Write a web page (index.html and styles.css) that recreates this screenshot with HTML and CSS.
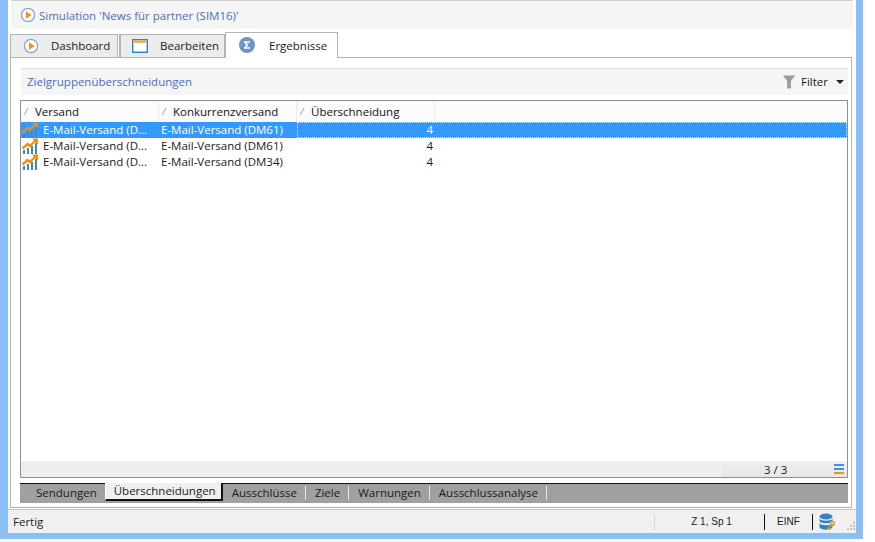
FILE: index.html
```html
<!DOCTYPE html>
<html>
<head>
  <title>Simulation</title>
  <link rel="stylesheet" href="styles.css">
</head>
<body>
  <svg class="defs" width="0" height="0">
    <symbol id="play" viewBox="0 0 16 16">
      <circle cx="8" cy="8" r="6.6" fill="#fdfdfd" stroke="#8aa6cf" stroke-width="1.3"/>
      <path d="M6 4.2 L11.6 8 L6 11.8 Z" fill="#f0920f"/>
    </symbol>
    <symbol id="chart" viewBox="0 0 16 16">
      <path d="M1 16v-4h2v4zM5 16v-6h2v6zM9 16v-8h2v8zM13 16v-11h2v11z" fill="#3f86c9"/>
      <path d="M0.500 10.500 L5.500 6 L8 8 L14 2" fill="none" stroke="#f0920f" stroke-width="2.400"/>
      <path d="M10 0.500 H16 V6.500 Z" fill="#f0920f"/>
    </symbol>
  </svg>

  <div class="window">
    <div class="title-bar">
      <svg class="icon"><use href="#play"/></svg>
      <span>Simulation 'News für partner (SIM16)'</span>
    </div>

    <div class="tabs">
      <div class="tab tab-dashboard">
        <svg class="icon"><use href="#play"/></svg>
        <span>Dashboard</span>
      </div>
      <div class="tab tab-edit">
        <svg class="icon" viewBox="0 0 16 16">
          <rect x="0.7" y="1.7" width="14.6" height="12.6" fill="#fff" stroke="#2e83c8" stroke-width="1.4"/>
          <rect x="1.4" y="2.4" width="13.2" height="2.6" fill="#f3b24a"/>
        </svg>
        <span>Bearbeiten</span>
      </div>
      <div class="tab tab-active">
        <svg class="icon" viewBox="0 0 16 16">
          <circle cx="8" cy="8" r="8" fill="#6f93c4"/>
          <path d="M5 4.2h6v1.5H7.4L9.3 8 7.4 10.3H11v1.5H5v-1.3L7.3 8 5 5.5z" fill="#fff"/>
        </svg>
        <span>Ergebnisse</span>
      </div>
    </div>

    <div class="panel">
      <div class="section-head">
        <span class="section-title">Zielgruppenüberschneidungen</span>
        <div class="filter">
          <svg class="filter-icon" viewBox="0 0 14 14"><path d="M0 0H13L8.5 6V14H4.5V6Z" fill="#999"/></svg>
          <span>Filter</span>
          <span class="caret"></span>
        </div>
      </div>

      <div class="grid">
        <div class="grid-head">
          <div class="col"><i class="sort">⁄</i>Versand</div>
          <div class="col"><i class="sort">⁄</i>Konkurrenzversand</div>
          <div class="col"><i class="sort">⁄</i>Überschneidung</div>
        </div>
        <div class="row row-selected">
          <div class="cell"><svg class="icon-chart"><use href="#chart"/></svg>E-Mail-Versand (D...</div>
          <div class="cell cell-2">E-Mail-Versand (DM61)</div>
          <div class="cell-focus"><span class="num">4</span></div>
        </div>
        <div class="row">
          <div class="cell"><svg class="icon-chart"><use href="#chart"/></svg>E-Mail-Versand (D...</div>
          <div class="cell cell-2">E-Mail-Versand (DM61)</div>
          <div class="cell-num">4</div>
        </div>
        <div class="row">
          <div class="cell"><svg class="icon-chart"><use href="#chart"/></svg>E-Mail-Versand (D...</div>
          <div class="cell cell-2">E-Mail-Versand (DM34)</div>
          <div class="cell-num">4</div>
        </div>
        <div class="grid-space"></div>
        <div class="grid-foot">
          <div class="counter">
            <span>3 / 3</span>
            <svg class="menu-icon" viewBox="0 0 10 10">
              <rect width="10" height="2" fill="#3f8fdc"/>
              <rect y="4" width="10" height="2" fill="#3f8fdc"/>
              <rect y="8" width="10" height="2" fill="#e8981f"/>
            </svg>
          </div>
        </div>
      </div>

      <div class="sub-tabs">
        <div class="sub-tab sub-first">Sendungen</div>
        <div class="sub-tab sub-active">Überschneidungen</div>
        <div class="sub-tab">Ausschlüsse</div>
        <div class="sub-tab">Ziele</div>
        <div class="sub-tab">Warnungen</div>
        <div class="sub-tab">Ausschlussanalyse</div>
      </div>
    </div>

    <div class="status-bar">
      <span class="status-text">Fertig</span>
      <div class="status-pos">Z 1, Sp 1</div>
      <div class="status-ins">EINF</div>
      <svg class="db-icon" viewBox="0 0 16 18">
        <ellipse cx="7" cy="3.5" rx="6.5" ry="3" fill="#2e83c8"/>
        <path d="M0.5 5.5c1 3 12 3 13 0v2.5c-1 3-12 3-13 0z" fill="#2e83c8"/>
        <path d="M0.5 10c1 3 12 3 13 0v4c-1 3.500-12 3.500-13 0z" fill="#2e83c8"/>
        <circle cx="13.500" cy="10.500" r="2" fill="none" stroke="#e8981f" stroke-width="1.400"/>
        <path d="M12.300 12L8 16.500M9.500 15l1.500 1.500" fill="none" stroke="#e8981f" stroke-width="1.500"/>
      </svg>
      <svg class="grip" viewBox="0 0 8 8">
        <path d="M6 0h2v2H6zM3 3h2v2H3zM6 3h2v2H6zM0 6h2v2H0zM3 6h2v2H3zM6 6h2v2H6z" fill="#c4c4c4"/>
      </svg>
    </div>
  </div>
</body>
</html>
```
FILE: styles.css
```css
html, body {
  margin: 0;
  padding: 0;
  background-color: #fff;
}

body {
  font-family: "Open Sans", Arial, sans-serif;
  font-size: 11.5px;
  color: #1a1a1a;
}

.defs {
  display: block;
  height: 0;
}

.window {
  box-sizing: border-box;
  width: 863px;
  height: 539px;
  background-color: #fff;
  border-left: 8px solid #8abff5;
  border-right: 7px solid #8abff5;
  border-bottom: 6px solid #8abff5;
  display: flex;
  flex-direction: column;
  padding: 0;
}

.icon {
  width: 16px;
  height: 16px;
  flex: none;
}

.title-bar {
  height: 28px;
  margin: 0 3px 0 3px;
  background-color: #f5f5f5;
  border-top: 1px solid #d0d0d0;
  display: flex;
  align-items: center;
  padding-left: 9px;
  color: #4a6fc0;
  flex: none;
}

.title-bar span {
  margin-left: 3px;
}

.tabs {
  display: flex;
  align-items: flex-end;
  height: 28px;
  margin-left: 2px;
  flex: none;
  position: relative;
  z-index: 1;
}

.tab {
  box-sizing: border-box;
  height: 23px;
  padding-bottom: 1px;
  background-color: #ececec;
  border: 1px solid #b4b4b4;
  border-bottom: none;
  display: flex;
  align-items: center;
}

.tab-dashboard {
  width: 108px;
  padding-left: 12px;
}

.tab-dashboard span {
  margin-left: 12px;
}

.tab-edit {
  width: 106px;
  padding-left: 11px;
  margin-left: 1px;
  border-left-width: 2px;
}

.tab-edit span {
  margin-left: 12px;
}

.tab-active {
  width: 113px;
  height: 26px;
  margin-bottom: -1px;
  background-color: #fff;
  padding-left: 13px;
}

.tab-active span {
  margin-left: 14px;
}

.panel {
  box-sizing: border-box;
  flex: 1;
  margin: 0 4px 0 2px;
  border: 1px solid #b4b4b4;
  background-color: #fff;
  padding: 10px 3px 4px 9px;
  display: flex;
  flex-direction: column;
  min-height: 0;
}

.section-head {
  box-sizing: border-box;
  height: 27px;
  margin: 0 0 5px 1px;
  background-color: #f5f5f5;
  border-top: 1px solid #dcdcdc;
  display: flex;
  align-items: center;
  padding: 0 4px 1px 6px;
  flex: none;
}

.section-title {
  color: #4a6fc0;
  flex: 1;
}

.filter {
  display: flex;
  align-items: center;
}

.filter-icon {
  width: 13px;
  height: 14px;
  margin-right: 5px;
}

.caret {
  width: 0;
  height: 0;
  margin-left: 8px;
  border-left: 4px solid transparent;
  border-right: 4px solid transparent;
  border-top: 4px solid #222;
}

.grid {
  box-sizing: border-box;
  flex: 1;
  border: 1px solid #8b9097;
  display: flex;
  flex-direction: column;
  min-height: 0;
}

.grid-head {
  display: flex;
  height: 21px;
  background-color: #fbfbfb;
  flex: none;
}

.col {
  box-sizing: border-box;
  width: 138px;
  border-right: 1px solid #e3ecf6;
  display: flex;
  align-items: center;
  color: #111;
}

.sort {
  width: 14px;
  margin-left: -2px;
  padding-right: 2px;
  text-align: center;
  font-size: 9px;
  font-style: normal;
  color: #777;
}

.row {
  display: flex;
  height: 16px;
  line-height: 16px;
  flex: none;
}

.row-selected {
  background-color: #3399ff;
  color: #fff;
}

.cell {
  width: 137px;
  display: flex;
  align-items: center;
  flex: none;
  white-space: nowrap;
}

.cell-2 {
  width: 139px;
  padding-left: 3px;
  box-sizing: border-box;
}

.icon-chart {
  width: 16px;
  height: 16px;
  margin: 0 5px 0 1px;
  flex: none;
}

.row-selected .icon-chart {
  opacity: 0.85;
}

.cell-focus {
  box-sizing: border-box;
  flex: 1;
  border: 1px dotted #dfeeff;
  line-height: 14px;
}

.num {
  display: block;
  width: 135px;
  text-align: right;
}

.cell-num {
  width: 136px;
  text-align: right;
}

.grid-space {
  flex: 1;
}

.grid-foot {
  height: 16px;
  background-color: #efefef;
  flex: none;
  display: flex;
  justify-content: flex-end;
}

.counter {
  box-sizing: border-box;
  width: 125px;
  background: linear-gradient(to bottom, #efefef, #e6e6e6);
  display: flex;
  align-items: center;
  padding: 0 3px 0 42px;
  color: #222;
}

.counter span {
  flex: 1;
}

.menu-icon {
  width: 10px;
  height: 10px;
}

.sub-tabs {
  display: flex;
  height: 19px;
  margin-top: 5px;
  background-color: #a0a0a0;
  border-top: 1px solid #111;
  flex: none;
}

.sub-tab {
  padding: 0 8px 0 9px;
  line-height: 13px;
  height: 14px;
  margin-top: 2px;
  border-right: 1px solid #e8e8e8;
  white-space: nowrap;
}

.sub-first {
  padding: 0 8px 0 16px;
  border-right: none;
}

.sub-active {
  padding: 0 5px 0 8px;
  background-color: #f0f0f0;
  border-bottom: 2px solid #111;
  border-right: 2px solid #111;
  border-left: 1px solid #fff;
  height: 16px;
  margin-top: -1px;
  line-height: 16px;
}

.status-bar {
  box-sizing: border-box;
  height: 24px;
  margin-top: 1px;
  border-top: 1px solid #c4c4c4;
  background-color: #f0f0f0;
  display: flex;
  align-items: center;
  padding-left: 5px;
  flex: none;
}

.status-text {
  flex: 1;
}

.status-pos {
  box-sizing: border-box;
  width: 110px;
  padding-left: 4px;
  border-left: 1px solid #d8d8d8;
  text-align: center;
  font: 10px "Liberation Sans", Arial, sans-serif;
  line-height: 16px;
}

.status-ins {
  width: 47px;
  border-left: 1px solid #111;
  border-right: 1px solid #111;
  text-align: center;
  font: 10px "Liberation Sans", Arial, sans-serif;
  line-height: 16px;
}

.db-icon {
  width: 16px;
  height: 18px;
  margin-left: 6px;
}

.grip {
  width: 8px;
  height: 8px;
  margin: 9px 1px 0 12px;
}
```
